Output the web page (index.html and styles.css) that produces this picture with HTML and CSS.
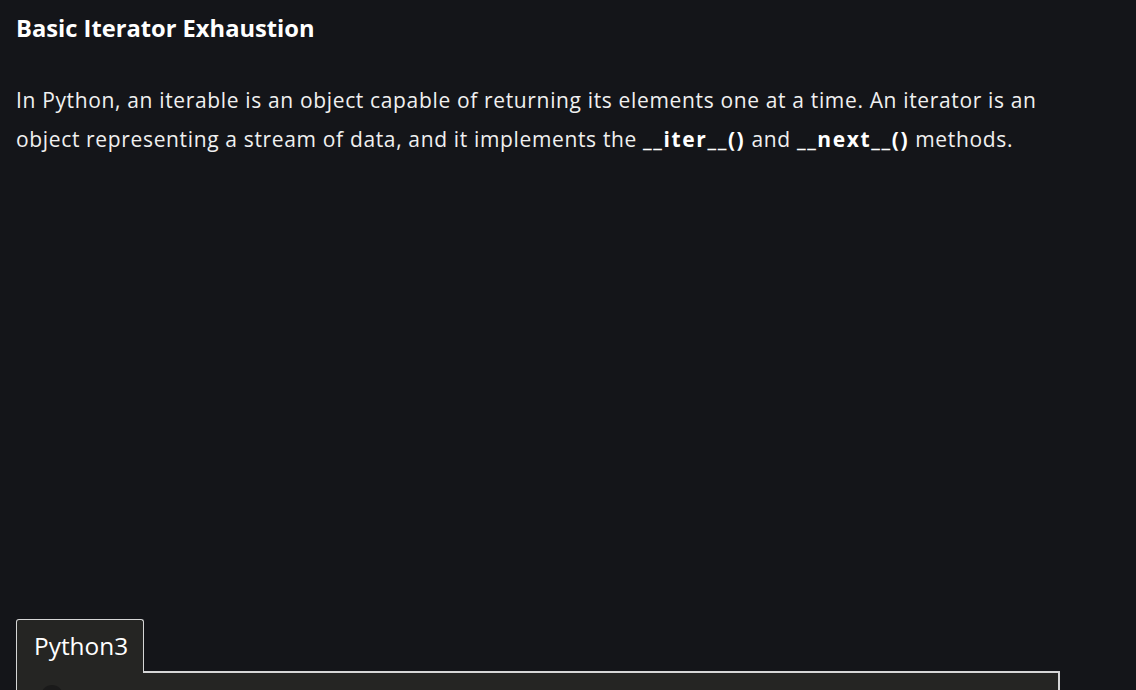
FILE: index.html
```html
<!DOCTYPE html>
<html>
<head>
<meta charset="utf-8">
<link rel="stylesheet" href="styles.css">
</head>
<body>
<div class="page">
  <h2 class="title">Basic Iterator Exhaustion</h2>
  <p class="text">In Python, an iterable is an object capable of returning its elements one at a time. An iterator is an object representing a stream of data, and it implements the <b>__iter__()</b> and <b>__next__()</b> methods.</p>
  <div class="editor">
    <div class="tabs">
      <div class="tab">Python3</div>
      <div class="tab-rest"></div>
    </div>
    <div class="code">
      <span class="dot"></span>
    </div>
  </div>
</div>
</body>
</html>
```
FILE: styles.css
```css
html, body {
  margin: 0;
  padding: 0;
  background: #141519;
  height: 100%;
  overflow: hidden;
}
.page {
  padding: 0 76px 0 16px;
  font-family: "Open Sans", "Noto Sans", sans-serif;
  color: #f2f2f2;
}
.title {
  margin: 0;
  padding-top: 13px;
  font-size: 23.7px;
  line-height: 30px;
  font-weight: 700;
  color: #ffffff;
}
.text {
  margin: 38px 0 0 0;
  font-size: 21px;
  line-height: 39px;
  letter-spacing: 0.65px;
  color: #f0f0f0;
}
.text b {
  font-weight: 700;
  letter-spacing: 1.6px;
  color: #ffffff;
}
.editor {
  margin-top: 460px;
}
.tabs {
  display: flex;
  align-items: flex-end;
}
.tab {
  width: 109px;
  height: 53px;
  padding-left: 17px;
  box-sizing: content-box;
  background: #252523;
  border: 1px solid #d6d6d6;
  border-bottom: none;
  border-radius: 3px 3px 0 0;
  font-size: 24.4px;
  line-height: 52px;
  color: #ffffff;
}
.tab-rest {
  flex: 1;
  border-bottom: 2px solid #d6d6d6;
}
.code {
  height: 60px;
  background: #252523;
  border-left: 1px solid #d6d6d6;
  border-right: 2px solid #d6d6d6;
  position: relative;
}
.dot {
  position: absolute;
  left: 24px;
  top: 12px;
  width: 22px;
  height: 22px;
  border-radius: 50%;
  background: #1a1a1a;
}
```
